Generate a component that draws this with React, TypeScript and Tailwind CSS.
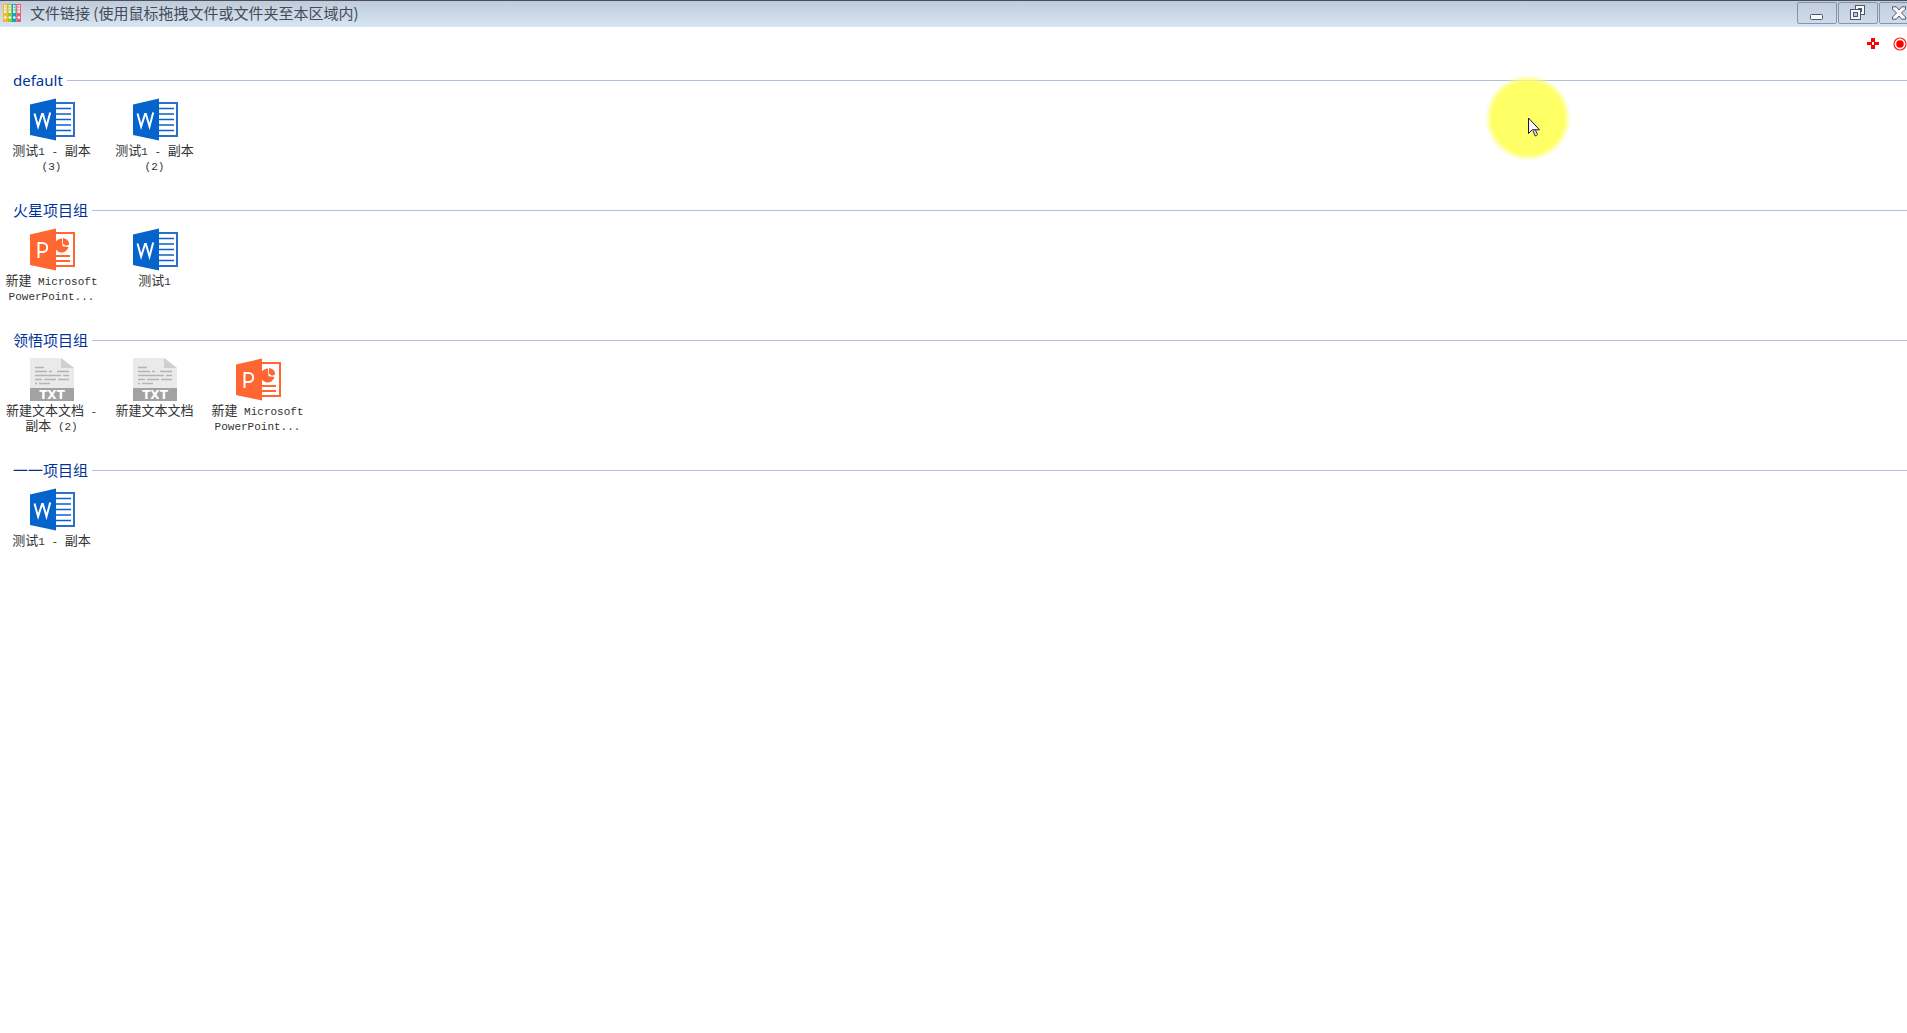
import React from "react";

type FileKind = "word" | "ppt" | "txt";
type FileItem = { kind: FileKind; lines: string[] };
type Group = { name: string; files: FileItem[] };

const groups: Group[] = [
  {
    name: "default",
    files: [
      { kind: "word", lines: ["测试1 - 副本", "(3)"] },
      { kind: "word", lines: ["测试1 - 副本", "(2)"] },
    ],
  },
  {
    name: "火星项目组",
    files: [
      { kind: "ppt", lines: ["新建 Microsoft", "PowerPoint..."] },
      { kind: "word", lines: ["测试1"] },
    ],
  },
  {
    name: "领悟项目组",
    files: [
      { kind: "txt", lines: ["新建文本文档 -", "副本 (2)"] },
      { kind: "txt", lines: ["新建文本文档"] },
      { kind: "ppt", lines: ["新建 Microsoft", "PowerPoint..."] },
    ],
  },
  { name: "一一项目组", files: [{ kind: "word", lines: ["测试1 - 副本"] }] },
];

function WordIcon() {
  return (
    <svg width="46" height="44" viewBox="0 0 46 44" aria-hidden="true">
      <rect x="22" y="5" width="22" height="33" fill="#fff" stroke="#2a70c8" strokeWidth="2" />
      <path d="M26 10.5h15M26 16h15M26 21.5h15M26 27h15M26 32.5h15" stroke="#0b62cb" strokeWidth="1.5" />
      <path d="M0 6.5 26 .5v42L0 37z" fill="#0563cc" />
      <path d="m4.5 15.5 3.6 13 4-12.5h.8l3.6 12.5 3.7-14" fill="none" stroke="#fff" strokeWidth="2" />
    </svg>
  );
}

function PptIcon() {
  return (
    <svg width="46" height="44" viewBox="0 0 46 44" aria-hidden="true">
      <rect x="22" y="5" width="22" height="33" fill="#fff" stroke="#ff6632" strokeWidth="2" />
      <path d="M32 10.5a7 7 0 1 0 6.5 8.5l-6-.8z" fill="#ff6632" />
      <path d="M33 10a7 7 0 0 1 6.2 6.4l-3.2 1.4-3-2z" fill="#ff6632" />
      <path d="M26 28h14M26 33h14" stroke="#ff6632" strokeWidth="2" />
      <path d="M0 6.5 26 .5v42L0 37z" fill="#ff6632" />
      <path d="M8.5 30V15h4.2a4.2 4.2 0 0 1 0 9H8.5" fill="none" stroke="#fff" strokeWidth="2" />
    </svg>
  );
}

function TxtIcon() {
  return (
    <svg width="46" height="44" viewBox="0 0 46 44" aria-hidden="true">
      <path d="M0 0h31l13 10v21H0z" fill="#eaeaea" />
      <path d="M31 0 44 10H31z" fill="#cfcfcf" />
      <path
        d="M5 9.5h9M5 13.5h12M19 13.5h3M27 13.5h12M5 17.5h26M33 17.5h6M5 21.5h7M14 21.5h12M28 21.5h11M5 25.5h2M9 25.5h11"
        stroke="#b4b4b2"
        strokeWidth="1.5"
      />
      <path d="M0 30h44v13H0z" fill="#a2a2a5" />
      <text
        x="22"
        y="41"
        textAnchor="middle"
        fill="#fff"
        className="font-['DejaVu_Sans',sans-serif] text-[12px] font-bold"
      >
        TXT
      </text>
    </svg>
  );
}

function FileIcon({ kind }: { kind: FileKind }) {
  if (kind === "word") return <WordIcon />;
  if (kind === "ppt") return <PptIcon />;
  return <TxtIcon />;
}

/** Latin runs use a half-width monospace face beside the full-width Chinese glyphs. */
function LabelLine({ text }: { text: string }) {
  return (
    <span className="block h-[15px] whitespace-pre">
      {text.split(/([\x20-\x7e]+)/).filter(Boolean).map((part, i) =>
        /^[\x20-\x7e]/.test(part) ? (
          <span key={i} className="font-['Liberation_Mono',monospace] text-[11px] leading-none">{part}</span>
        ) : (
          <span key={i}>{part}</span>
        )
      )}
    </span>
  );
}

function FileTile({ file }: { file: FileItem }) {
  return (
    <button type="button" className="flex w-[103px] flex-col items-center">
      <span className="pl-[3px]">
        <FileIcon kind={file.kind} />
      </span>
      <span className="text-center font-['Noto_Sans_CJK_SC',sans-serif] text-[13px] leading-[15px] text-[#333]">
        {file.lines.map((line) => <LabelLine key={line} text={line} />)}
      </span>
    </button>
  );
}

function FileGroup({ group }: { group: Group }) {
  return (
    <section className="min-h-[130px]">
      <div className="flex h-6 items-center gap-1 pl-[13px]">
        <h2 className="font-['Noto_Sans','Noto_Sans_CJK_SC',sans-serif] text-[15px] leading-6 text-[#003399]">
          {group.name}
        </h2>
        <div className="h-px flex-1 bg-[#b0c0e0]" />
      </div>
      <div className="mt-1.5 flex items-start">
        {group.files.map((file, i) => <FileTile key={i} file={file} />)}
      </div>
    </section>
  );
}

function BinderIcon() {
  const colors = ["#fdb813", "#8cc63f", "#12a5b5", "#f0596e"];
  return (
    <svg width="18" height="18" viewBox="0 0 18 18" aria-hidden="true">
      {colors.map((c, i) => (
        <g key={c} transform={`translate(${i * 4.5} 0)`}>
          <rect width="4.5" height="18" fill={c} />
          <rect x="1" y="1" width="2.5" height="8" fill="#f7eee6" />
          <path d="M1.5 3h1.5M1.5 6h1.5" stroke={c} strokeWidth="1" />
          <circle cx="2.3" cy="13.5" r="1.3" fill="#fff" />
        </g>
      ))}
    </svg>
  );
}

function CaptionButton({ label, children }: { label: string; children: React.ReactNode }) {
  return (
    <button
      type="button"
      aria-label={label}
      className="flex h-[22px] w-10 shrink-0 items-center justify-center rounded-xs border border-[#8793ad] bg-linear-to-b from-[#c2cfdf] to-[#cedbea]"
    >
      {children}
    </button>
  );
}

function TitleBar() {
  return (
    <header className="flex h-[27px] items-start overflow-hidden border-t border-[#4c4f55] bg-linear-to-b from-[#becbdb] to-[#d8e5f2]">
      <div className="flex h-6 flex-1 items-center gap-[9px] pl-[3px]">
        <BinderIcon />
        <h1 className="font-['Noto_Sans_CJK_SC',sans-serif] text-[15px] leading-6 text-[#444b54]">
          文件链接 (使用鼠标拖拽文件或文件夹至本区域内)
        </h1>
      </div>
      <div className="-mr-3 mt-px flex gap-px">
        <CaptionButton label="最小化">
          <svg width="14" height="18" viewBox="0 0 14 18">
            <rect x=".5" y="10.5" width="12" height="5" rx="1" fill="#fafafa" stroke="#4f586b" />
          </svg>
        </CaptionButton>
        <CaptionButton label="还原">
          <svg width="16" height="16" viewBox="0 0 16 16" fill="#fafafa" stroke="#4f586b">
            <rect x="5.5" y=".5" width="9" height="9" />
            <rect x="8.5" y="3.5" width="3" height="3" fill="#bdcada" />
            <rect x=".5" y="4.5" width="10" height="10" />
            <rect x="3.5" y="7.5" width="4" height="4" fill="#bdcada" />
          </svg>
        </CaptionButton>
        <CaptionButton label="关闭">
          <svg width="14" height="14" viewBox="0 0 14 14">
            <path
              d="M.5.8h3.8L7 4 9.7.8h3.8V3l-4 4 4 4v2.2H9.7L7 10l-2.7 3.2H.5V11l4-4-4-4z"
              fill="#fafafa"
              stroke="#4f586b"
            />
          </svg>
        </CaptionButton>
      </div>
    </header>
  );
}

function Pointer() {
  return (
    <div className="pointer-events-none absolute right-[336px] top-[75px] size-[86px] rounded-full bg-[radial-gradient(circle_closest-side,#ffff66_84%,#ffff6600_100%)]">
      <svg className="absolute left-[43px] top-[42px]" width="14" height="21" viewBox="0 0 14 21">
        <path d="m7 12 2.5 5.5q-1 2-2.5 1.3L5 13.5" fill="#ddd" stroke="#333" />
        <path d="M.5 1v15.5l3.7-3.7h7.3z" fill="#f8f8f8" stroke="#16163c" />
      </svg>
    </div>
  );
}

export default function App() {
  return (
    <div className="relative min-h-screen overflow-hidden bg-white">
      <TitleBar />
      <div className="flex h-[33px] items-center justify-end gap-[14px]">
        <button type="button" aria-label="添加">
          <svg width="12" height="12" viewBox="0 0 12 12">
            <path d="M4 0h4v4h4v3H8v4H4V7H0V4h4z" fill="#f00" />
            <path d="M5 4h2v3H5z" fill="#fff" />
          </svg>
        </button>
        <button type="button" aria-label="录制">
          <svg width="14" height="14" viewBox="0 0 14 14">
            <circle cx="7" cy="7" r="6" fill="#fff" stroke="#f22" strokeWidth="1.2" />
            <circle cx="7" cy="7" r="3.8" fill="#f00" />
          </svg>
        </button>
      </div>
      <main className="mt-2">
        {groups.map((group) => <FileGroup key={group.name} group={group} />)}
      </main>
      <Pointer />
    </div>
  );
}
